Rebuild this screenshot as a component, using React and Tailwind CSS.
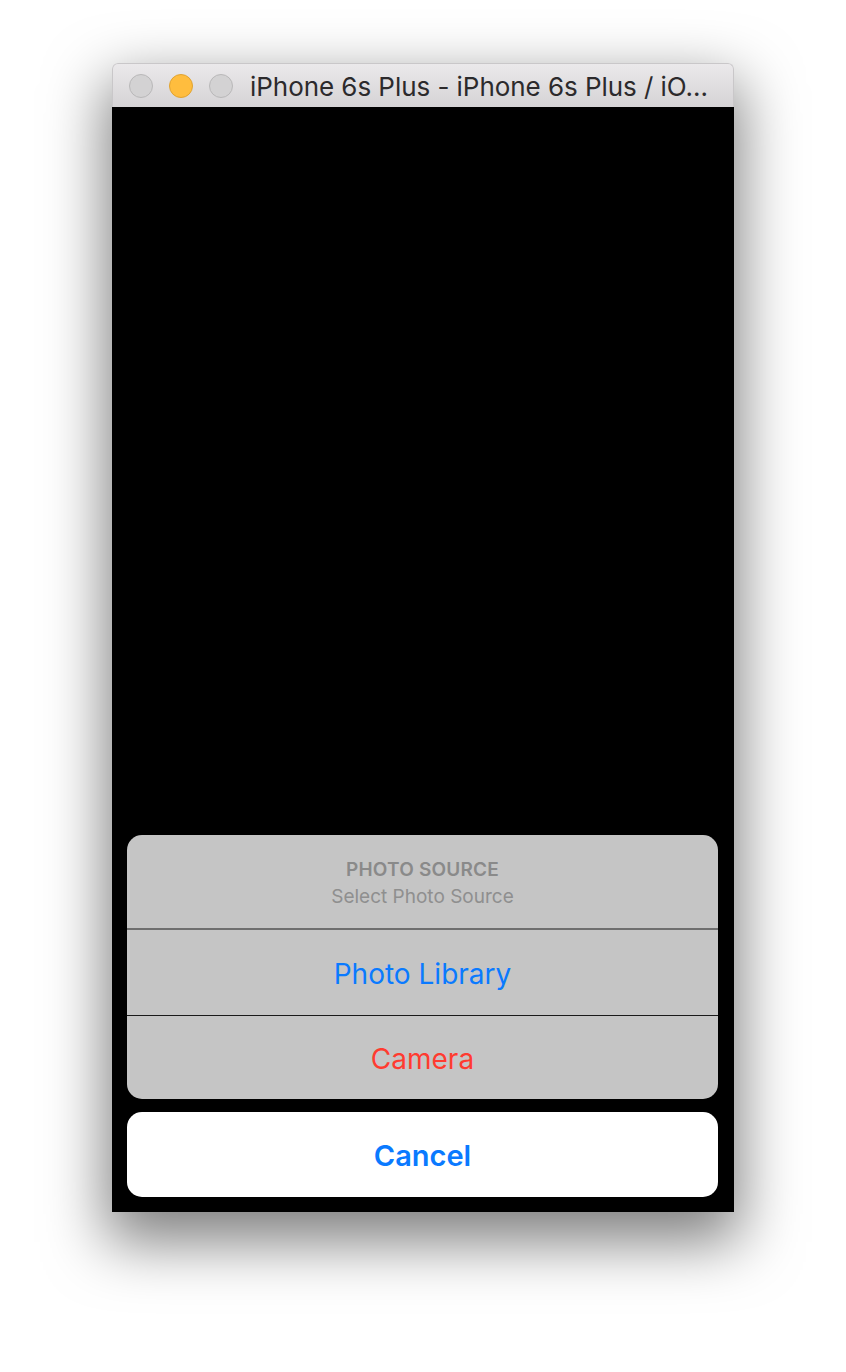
export default function App() {
  const font = { fontFamily: 'Inter, "Noto Sans", sans-serif' };
  return (
    <div className="w-[846px] h-[1372px] bg-white overflow-hidden pt-[63px] pl-[112px]" style={font}>
      <div className="w-[622px] flex flex-col rounded-t-[6px] shadow-[0_24px_60px_6px_rgba(0,0,0,0.5)]">
        <div className="h-[44px] rounded-t-[6px] border border-b-0 border-[#c9c7c9] bg-gradient-to-b from-[#ebe9eb] to-[#d5d3d5] flex items-center pl-[16px] gap-[16px] border-b border-b-[#b8b6b8]">
          <div className="w-[24px] h-[24px] rounded-full bg-[#d3d2d3] border border-[#b9b8b9]" />
          <div className="w-[24px] h-[24px] rounded-full bg-[#ffbd3e] border border-[#e0a331]" />
          <div className="w-[24px] h-[24px] rounded-full bg-[#d3d2d3] border border-[#b9b8b9]" />
          <div className="ml-[1px] pt-[2px] text-[26px] text-[#2c2a2c] tracking-[-0.05px] whitespace-nowrap">iPhone 6s Plus - iPhone 6s Plus / iO...</div>
        </div>
        <div className="h-[1105px] bg-black flex flex-col justify-end pl-[15px] pr-[16px] pb-[15px]">
          <div className="rounded-[15px] bg-[#c5c5c5] overflow-hidden flex flex-col">
            <div className="h-[93px] flex flex-col items-center justify-center pt-[4px]">
              <div className="text-[19px] font-semibold text-[#8a8a8a] leading-[26px] tracking-[0.2px]">PHOTO SOURCE</div>
              <div className="text-[19px] text-[#8f8f8f] leading-[27px]">Select Photo Source</div>
            </div>
            <div className="h-[2px] bg-[#6f6f6f]" />
            <div className="h-[85px] flex items-center justify-center pt-[3px] text-[28px] text-[#0a7aff]">Photo Library</div>
            <div className="h-px bg-[#1a1a1a]" />
            <div className="h-[83px] flex items-center justify-center pt-[3px] text-[28px] text-[#ff3b30]">Camera</div>
          </div>
          <div className="mt-[13px] h-[85px] rounded-[15px] bg-white flex items-center justify-center pt-[3px] text-[29px] font-semibold text-[#0a7aff]">Cancel</div>
        </div>
      </div>
    </div>
  );
}
